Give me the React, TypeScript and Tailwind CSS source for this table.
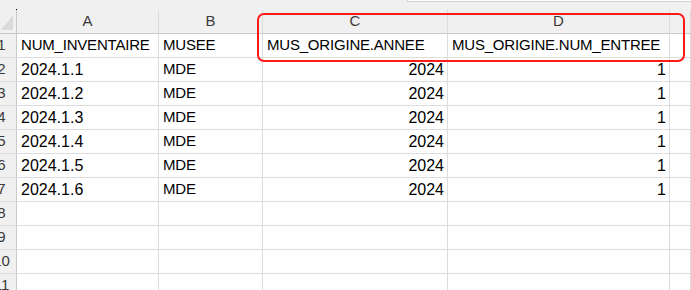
import React from "react"

// E runs past the right edge, so its letter is never in view
const columns = [
  { key: "A", width: 142, label: "A" },
  { key: "B", width: 104, label: "B" },
  { key: "C", width: 185, label: "C" },
  { key: "D", width: 222, label: "D" },
  { key: "E", width: 21, label: "" },
]

type Cell = { value: string; align?: "left" | "right" }

const rows: Cell[][] = [
  [
    { value: "NUM_INVENTAIRE" },
    { value: "MUSEE" },
    { value: "MUS_ORIGINE.ANNEE" },
    { value: "MUS_ORIGINE.NUM_ENTREE" },
  ],
  ...[1, 2, 3, 4, 5, 6].map((n) => [
    { value: `2024.1.${n}` },
    { value: "MDE" },
    { value: "2024", align: "right" as const },
    { value: "1", align: "right" as const },
  ]),
  [],
  [],
  [],
  [],
]

const font = { fontFamily: '"Liberation Sans", Arial, sans-serif' }

const isNumeric = (v: string) => /^[0-9.]+$/.test(v)

function RowHeader({ n }: { n: number }) {
  return (
    <div className="h-[24px] w-[17px] overflow-hidden border-r border-b border-r-[#c9c9c9] border-b-[#dcdcdc] bg-[#f0f0f0] flex items-center">
      <div className="w-[30px] -ml-[13.5px] shrink-0 text-center text-[15px] text-[#3b3b3b]">
        {n}
      </div>
    </div>
  )
}

export default function App() {
  return (
    <div className="relative w-[691px] h-[290px] overflow-hidden bg-white" style={font}>
      {/* strip under the formula bar */}
      <div className="flex h-[10px] bg-[#f0f0f0]">
        <div className="relative w-[17px]">
          <div className="absolute right-0 bottom-0 w-px h-px bg-black" />
        </div>
        <div className="flex-1" />
        <div className="w-[284px] h-[2px] bg-white border-b border-l border-[#d0d0d0]" />
      </div>

      {/* column letters */}
      <div className="flex h-[24px] bg-[#f0f0f0]">
        <div className="w-[17px] h-full border-r border-b border-[#c9c9c9] flex items-end justify-end pr-[3px] pb-[3px]">
          <div className="w-0 h-0 border-l-[12px] border-l-transparent border-b-[15px] border-b-[#dadada]" />
        </div>
        {columns.map((c) => (
          <div
            key={c.key}
            style={{ width: c.width }}
            className="h-full shrink-0 border-r border-b border-r-[#dcdcdc] border-b-[#c9c9c9] flex items-center justify-center text-[15px] text-[#3b3b3b]"
          >
            {c.label}
          </div>
        ))}
      </div>

      {/* grid body */}
      {rows.map((cells, i) => (
        <div key={i} className="flex">
          <RowHeader n={i + 1} />
          {columns.map((c, j) => {
            const cell = cells[j]
            const numeric = cell ? isNumeric(cell.value) : false
            return (
              <div
                key={c.key}
                style={{ width: c.width }}
                className={`h-[24px] shrink-0 border-r border-b border-[#dcdcdc] flex items-center overflow-hidden whitespace-nowrap text-black ${
                  numeric ? "text-[16px]" : "text-[15px] tracking-[-0.2px]"
                } ${cell?.align === "right" ? "justify-end pr-[3px]" : "pl-[4px]"}`}
              >
                {cell?.value}
              </div>
            )
          })}
        </div>
      ))}

      {/* highlight around the MUS_ORIGINE columns */}
      <div className="absolute left-[257px] top-[13px] w-[428px] h-[49px] rounded-[7px] border-2 border-[#ff1a1a] pointer-events-none" />
    </div>
  )
}
